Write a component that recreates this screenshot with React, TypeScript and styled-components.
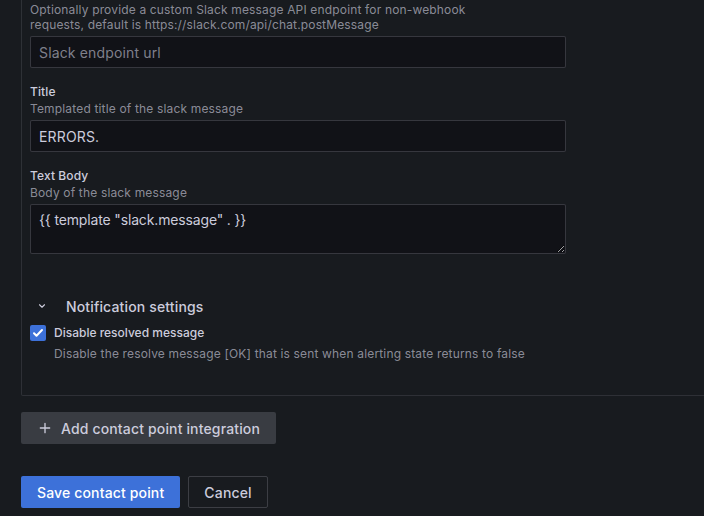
import styled, { createGlobalStyle } from 'styled-components'

const GlobalStyle = createGlobalStyle`
  html, body {
    margin: 0;
    padding: 0;
    background: #181b1f;
    overflow: hidden;
  }
  body {
    font-family: Inter, 'Noto Sans', sans-serif;
    color: #ccccdc;
    -webkit-font-smoothing: antialiased;
  }
`

const Page = styled.div`
  padding: 0 0 0 21px;
  width: 760px;
  display: flex;
  flex-direction: column;
`

const Panel = styled.div`
  border: 1px solid rgba(204, 204, 220, 0.12);
  border-top: none;
  border-right: none;
  border-radius: 0 0 0 2px;
  padding: 2px 0 34px 8px;
  display: flex;
  flex-direction: column;
`

const Field = styled.div`
  display: flex;
  flex-direction: column;
  width: 536px;
  margin-bottom: 16px;
`

const Label = styled.div`
  font-size: 12px;
  font-weight: 500;
  line-height: 15px;
  letter-spacing: 0.1px;
  color: #ccccdc;
  margin-bottom: 2px;
`

const Description = styled.div`
  font-size: 12px;
  line-height: 15px;
  letter-spacing: 0.16px;
  color: rgba(204, 204, 220, 0.65);
  margin-bottom: 4px;
`

const Input = styled.input`
  box-sizing: border-box;
  height: 32px;
  width: 100%;
  background: #111217;
  border: 1px solid rgba(204, 204, 220, 0.2);
  border-radius: 2px;
  padding: 0 8px;
  font-family: inherit;
  font-size: 14px;
  letter-spacing: 0.15px;
  color: #ccccdc;
  outline: none;

  &::placeholder {
    color: rgba(204, 204, 220, 0.6);
  }
`

const TextArea = styled.textarea`
  box-sizing: border-box;
  height: 50px;
  width: 100%;
  background: #111217;
  border: 1px solid rgba(204, 204, 220, 0.2);
  border-radius: 2px;
  padding: 6px 8px 4px;
  font-family: inherit;
  font-size: 14px;
  line-height: 18px;
  letter-spacing: -0.15px;
  color: #ccccdc;
  outline: none;
  resize: vertical;
  display: block;
`

const SectionHeader = styled.div`
  display: flex;
  align-items: center;
  gap: 19px;
  margin: 25px 0 8px 7px;
  height: 22px;
  font-size: 14px;
  font-weight: 500;
  letter-spacing: 0.15px;
  color: #ccccdc;
`

const CheckRow = styled.div`
  display: flex;
  gap: 8px;
  align-items: flex-start;
`

const CheckBox = styled.span`
  width: 16px;
  height: 16px;
  border-radius: 2px;
  background: #3d71d9;
  display: flex;
  align-items: center;
  justify-content: center;
  flex-shrink: 0;
`

const CheckText = styled.div`
  display: flex;
  flex-direction: column;
  gap: 5px;
`

const CheckLabel = styled.div`
  font-size: 12px;
  font-weight: 500;
  line-height: 16px;
  color: #ccccdc;
`

const CheckDescription = styled.div`
  font-size: 12px;
  line-height: 15px;
  letter-spacing: 0.16px;
  color: rgba(204, 204, 220, 0.65);
`

const Button = styled.button<{ $variant: 'primary' | 'secondary' | 'outline' }>`
  box-sizing: border-box;
  height: 32px;
  padding: 0 15px;
  border-radius: 2px;
  font-family: inherit;
  font-size: 14px;
  font-weight: 500;
  letter-spacing: 0.15px;
  display: inline-flex;
  align-items: center;
  gap: 8px;
  cursor: pointer;
  border: 1px solid
    ${({ $variant }) => ($variant === 'outline' ? 'rgba(204, 204, 220, 0.2)' : 'transparent')};
  background: ${({ $variant }) =>
    $variant === 'primary' ? '#3d71d9' : $variant === 'secondary' ? '#393c42' : 'transparent'};
  color: ${({ $variant }) => ($variant === 'primary' ? '#ffffff' : '#ccccdc')};
`

const AddRow = styled.div`
  display: flex;
  margin-top: 16px;
`

const Actions = styled.div`
  display: flex;
  gap: 8px;
  margin-top: 32px;
`

const ChevronDown = () => (
  <svg width="10" height="10" viewBox="0 0 24 24" fill="none">
    <path d="M6 9l6 6 6-6" stroke="#ccccdc" strokeWidth="2.6" strokeLinecap="round" strokeLinejoin="round" />
  </svg>
)

const CheckMark = () => (
  <svg width="12" height="12" viewBox="0 0 24 24" fill="none">
    <path d="M4 12.5l5 5L20 6" stroke="#ffffff" strokeWidth="4" strokeLinecap="round" strokeLinejoin="round" />
  </svg>
)

const PlusIcon = () => (
  <svg width="16" height="16" viewBox="0 0 24 24" fill="none">
    <path d="M12 5v14M5 12h14" stroke="#ccccdc" strokeWidth="2" strokeLinecap="round" />
  </svg>
)

export default function App() {
  return (
    <>
      <GlobalStyle />
      <Page>
        <Panel>
          <Field>
            <Description>
              Optionally provide a custom Slack message API endpoint for non-webhook
              <br />
              requests, default is https://slack.com/api/chat.postMessage
            </Description>
            <Input placeholder="Slack endpoint url" />
          </Field>

          <Field>
            <Label>Title</Label>
            <Description>Templated title of the slack message</Description>
            <Input defaultValue="ERRORS." />
          </Field>

          <Field>
            <Label>Text Body</Label>
            <Description>Body of the slack message</Description>
            <TextArea defaultValue={'{{ template "slack.message" . }}'} />
          </Field>

          <SectionHeader>
            <ChevronDown />
            Notification settings
          </SectionHeader>

          <CheckRow>
            <CheckBox>
              <CheckMark />
            </CheckBox>
            <CheckText>
              <CheckLabel>Disable resolved message</CheckLabel>
              <CheckDescription>
                Disable the resolve message [OK] that is sent when alerting state returns to false
              </CheckDescription>
            </CheckText>
          </CheckRow>
        </Panel>

        <AddRow>
          <Button $variant="secondary">
            <PlusIcon />
            Add contact point integration
          </Button>
        </AddRow>

        <Actions>
          <Button $variant="primary">Save contact point</Button>
          <Button $variant="outline">Cancel</Button>
        </Actions>
      </Page>
    </>
  )
}
